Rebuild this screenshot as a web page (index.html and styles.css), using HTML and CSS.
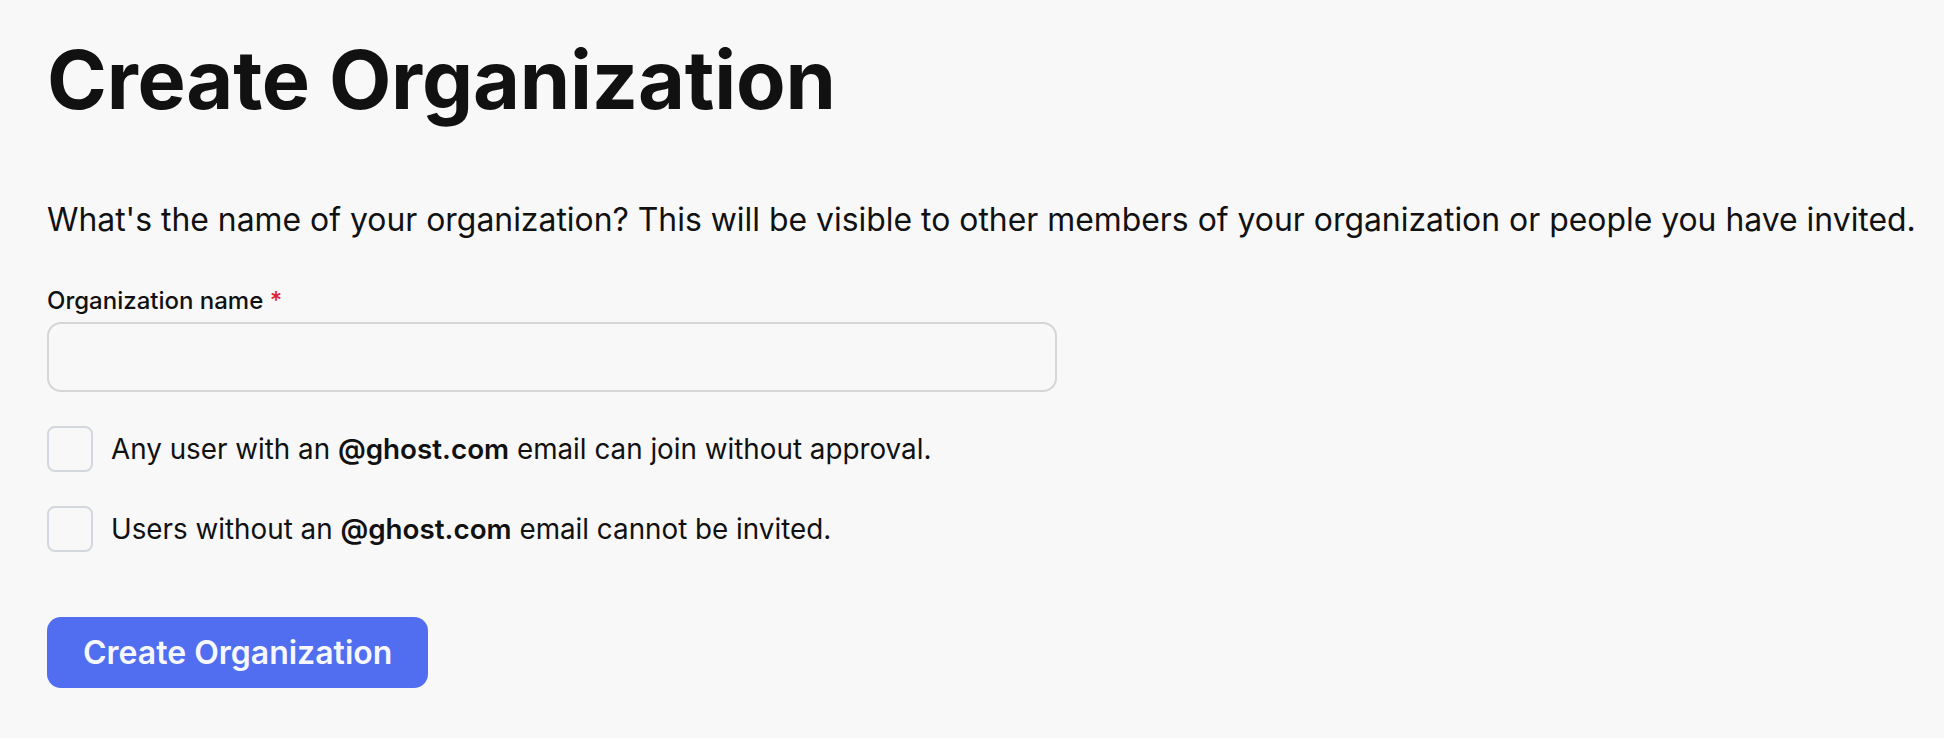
FILE: index.html
```html
<!DOCTYPE html>
<html lang="en">
<head>
<meta charset="utf-8">
<title>Create Organization</title>
<link rel="stylesheet" href="styles.css">
</head>
<body>
<main class="page">
  <h1 class="title">Create Organization</h1>
  <p class="intro">What's the name of your organization? This will be visible to other members of your organization or people you have invited.</p>
  <form class="form">
    <label class="field-label" for="org-name">Organization name <span class="req">*</span></label>
    <input class="text-input" id="org-name" type="text">
    <div class="checks">
      <label class="check-row"><span class="check-box"></span><span class="check-text">Any user with an <b>@ghost.com</b> email can join without approval.</span></label>
      <label class="check-row"><span class="check-box"></span><span class="check-text">Users without an <b>@ghost.com</b> email cannot be invited.</span></label>
    </div>
    <div class="actions">
      <button class="btn-primary" type="button">Create Organization</button>
    </div>
  </form>
</main>
</body>
</html>
```

FILE: styles.css
```css
* { box-sizing: border-box; }
html, body {
  margin: 0;
  padding: 0;
  background: #f8f8f8;
}
body {
  font-family: "Inter", "Noto Sans", sans-serif;
  color: #111111;
}
.page {
  padding: 30px 10px 40px 47px;
}
.title {
  margin: 0;
  font-size: 81px;
  line-height: 100px;
  font-weight: 700;
  letter-spacing: -0.2px;
}
.intro {
  margin: 66px 0 0;
  font-size: 31.9px;
  line-height: 48px;
  font-weight: 400;
  white-space: nowrap;
}
.form {
  display: flex;
  flex-direction: column;
  margin-top: 41px;
}
.field-label {
  font-size: 24px;
  line-height: 32px;
  font-weight: 500;
}
.req { color: #e0242f; }
.text-input {
  margin-top: 5px;
  width: 1010px;
  height: 70px;
  border: 2px solid #d6d6d6;
  border-radius: 14px;
  background: #f8f8f8;
  font: inherit;
  font-size: 26px;
  padding: 0 20px;
  outline: none;
}
.checks {
  display: flex;
  flex-direction: column;
  gap: 34px;
  margin-top: 34px;
}
.check-row {
  display: flex;
  align-items: center;
  gap: 18px;
}
.check-box {
  flex: none;
  width: 46px;
  height: 46px;
  border: 2px solid #d3d7de;
  border-radius: 8px;
  background: #f8f8f8;
}
.check-text {
  font-size: 27.8px;
  line-height: 34px;
}
.check-text b { font-weight: 600; }
.actions {
  margin-top: 65px;
}
.btn-primary {
  height: 71px;
  padding: 0 36px;
  border: none;
  border-radius: 14px;
  background: #516ef0;
  color: #f6f7ff;
  font-family: "Inter", "Noto Sans", sans-serif;
  font-size: 32px;
  font-weight: 600;
  cursor: pointer;
}
```
